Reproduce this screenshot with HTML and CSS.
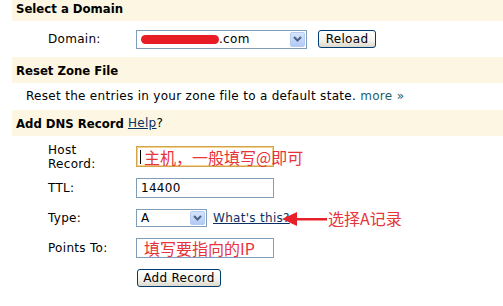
FILE: index.html
```html
<!DOCTYPE html>
<html>
<head>
<meta charset="utf-8">
<link rel="stylesheet" href="styles.css">
</head>
<body>
<div class="page">
  <div class="band band-first">Select a Domain</div>
  <div class="domain-row">
    <span class="label">Domain:</span>
    <div class="select select-domain">
      <span class="select-value"><span class="redact"></span>.com</span>
      <span class="select-btn"><svg width="9" height="6" viewBox="0 0 9 6"><path d="M1 1 L4.5 4.5 L8 1" fill="none" stroke="#4d6185" stroke-width="2"/></svg></span>
    </div>
    <button class="btn btn-reload">Reload</button>
  </div>
  <div class="band">Reset Zone File</div>
  <p class="desc">Reset the entries in your zone file to a default state. <a class="more">more »</a></p>
  <div class="band">Add DNS Record <a class="link">Help</a><span class="plain">?</span></div>
  <div class="form">
    <div class="row row-host">
      <span class="label"><span class="label-wrap">Host Record:</span></span>
      <div class="field">
        <div class="input input-focus"><span class="caret"></span></div>
        <span class="note note-host">主机，一般填写@即可</span>
      </div>
    </div>
    <div class="row">
      <span class="label">TTL:</span>
      <div class="field"><div class="input">14400</div></div>
    </div>
    <div class="row row-type">
      <span class="label">Type:</span>
      <div class="field">
        <div class="select select-type">
          <span class="select-value">A</span>
          <span class="select-btn"><svg width="9" height="6" viewBox="0 0 9 6"><path d="M1 1 L4.5 4.5 L8 1" fill="none" stroke="#4d6185" stroke-width="2"/></svg></span>
        </div>
        <a class="link whats">What's this?</a>
        <svg class="arrow" width="46" height="14" viewBox="0 0 46 14"><polygon points="0,7 15,0 15,14" fill="#e8202a"/><rect x="14" y="6" width="31" height="2.5" fill="#e8202a"/></svg>
        <span class="note note-type">选择A记录</span>
      </div>
    </div>
    <div class="row">
      <span class="label">Points To:</span>
      <div class="field">
        <div class="input"></div>
        <span class="note note-points">填写要指向的IP</span>
      </div>
    </div>
    <div class="row row-btn">
      <span class="label"></span>
      <button class="btn btn-add">Add Record</button>
    </div>
  </div>
</div>
</body>
</html>
```

FILE: styles.css
```css
html, body {
  margin: 0;
  padding: 0;
  background: #ffffff;
}
body {
  font-family: "DejaVu Sans", Verdana, sans-serif;
  font-size: 12px;
  letter-spacing: 0.3px;
  color: #000;
  width: 503px;
  height: 306px;
  overflow: hidden;
}
.page {
  display: flex;
  flex-direction: column;
}
.band {
  margin-left: 12px;
  background: #fdf6e3;
  height: 26px;
  padding-left: 4px;
  display: flex;
  align-items: center;
  font-family: "DejaVu Sans Condensed", "DejaVu Sans", sans-serif;
  font-stretch: condensed;
  font-weight: bold;
  font-size: 13px;
  letter-spacing: 0;
  line-height: 15px;
  box-sizing: border-box;
}
.band-first {
  height: 21px;
  align-items: flex-start;
  padding-top: 1px;
}
.band .plain {
  font-weight: normal;
  font-family: "DejaVu Sans", sans-serif;
  font-stretch: normal;
  font-size: 12px;
  letter-spacing: 0.3px;
}
.band .link {
  margin-left: 4px;
  font-weight: normal;
  font-family: "DejaVu Sans", sans-serif;
  font-stretch: normal;
  font-size: 12px;
  letter-spacing: 0.3px;
}
.link {
  color: #0b2f63;
  text-decoration: underline;
}
.more {
  color: #1a5f70;
  text-decoration: none;
}
.domain-row {
  height: 36px;
  display: flex;
  align-items: center;
  padding-left: 48px;
}
.label {
  width: 88px;
  flex: none;
  line-height: 14px;
}
.label-wrap {
  display: block;
  width: 60px;
}
.select {
  box-sizing: border-box;
  border: 1px solid #7f9db9;
  background: #fff;
  display: flex;
  align-items: center;
  justify-content: space-between;
  padding: 1px;
}
.select-domain {
  width: 171px;
  height: 19px;
}
.select-type {
  width: 71px;
  height: 18px;
}
.select-value {
  padding-left: 3px;
  display: flex;
  align-items: center;
}
.redact {
  display: inline-block;
  width: 78px;
  height: 9px;
  border-radius: 5px;
  background: #e81c24;
}
.select-btn {
  width: 15px;
  height: 100%;
  box-sizing: border-box;
  border: 1px solid #b5cbf3;
  border-radius: 2px;
  background: linear-gradient(#d6e4fc, #b3caf5);
  display: flex;
  align-items: center;
  justify-content: center;
}
.btn {
  box-sizing: border-box;
  font-family: "DejaVu Sans", sans-serif;
  font-size: 12px;
  letter-spacing: 0.3px;
  color: #000;
  border: 1px solid #003c74;
  border-radius: 3px;
  background: linear-gradient(#ffffff, #f3f2ec 60%, #dcd9cc);
  padding: 0;
  line-height: 14px;
}
.btn-reload {
  margin-left: 11px;
  width: 58px;
  height: 18px;
}
.desc {
  margin: 0;
  height: 27px;
  line-height: 27px;
  padding-left: 26px;
}
.form {
  padding-top: 10px;
  padding-left: 48px;
  display: flex;
  flex-direction: column;
  gap: 11px;
}
.row {
  display: flex;
  align-items: center;
  height: 20px;
}
.row-host {
  height: 21px;
}
.row-type {
  height: 18px;
}
.row-btn {
  height: 18px;
}
.field {
  position: relative;
  display: flex;
  align-items: center;
  height: 100%;
}
.input {
  box-sizing: border-box;
  width: 138px;
  height: 100%;
  border: 1px solid #7f9db9;
  background: #fff;
  padding-left: 4px;
  display: flex;
  align-items: center;
  position: relative;
}
.input-focus {
  border: 1px solid #d3a54a;
  box-shadow: inset 0 0 0 1px #f3d38c;
}
.caret {
  position: absolute;
  left: 3px;
  top: 3px;
  width: 1px;
  height: 14px;
  background: #000;
}
.note {
  position: absolute;
  font-family: "Noto Sans CJK SC", sans-serif;
  font-size: 16px;
  letter-spacing: 0;
  line-height: 18px;
  color: #e6343a;
  white-space: nowrap;
  top: 50%;
  transform: translateY(-50%);
}
.note-host {
  left: 8px;
}
.note-points {
  left: 8px;
}
.whats {
  margin-left: 6px;
}
.arrow {
  position: absolute;
  left: 146px;
  top: 3px;
}
.note-type {
  left: 192px;
}
.btn-add {
  margin-left: 1px;
  width: 84px;
  height: 18px;
}
```
